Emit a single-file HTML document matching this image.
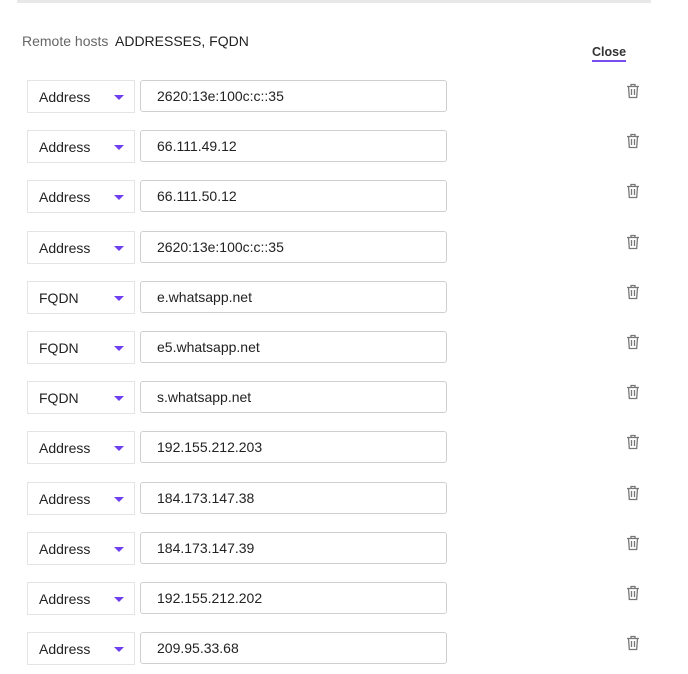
<!DOCTYPE html>
<html><head><style>
body{margin:0;width:688px;height:674px;background:#fff;font-family:"Liberation Sans",sans-serif;color:#222;position:relative;overflow:hidden}
.bar{position:absolute;left:17px;top:0;width:634px;height:3px;background:#e8e8e8}
.lbl{position:absolute;left:22px;top:33px;font-size:14px;color:#666}
.val{position:absolute;left:115px;top:33px;font-size:14px;color:#222}
.close{position:absolute;left:592px;top:45px;font-size:12.5px;font-weight:bold;color:#333;border-bottom:2px solid #7a4df0;padding-bottom:1px}
.sel{position:absolute;left:27px;width:108px;height:33px;border:1px solid #e4e4e4;box-sizing:border-box}
.sel span{position:absolute;left:11px;top:8px;font-size:14px}
.sel i{position:absolute;left:86px;top:14px;width:0;height:0;border-left:5px solid transparent;border-right:5px solid transparent;border-top:5px solid #6d3ff0}
.inp{position:absolute;left:140px;width:307px;height:32px;border:1px solid #cfcfcf;border-radius:3px;box-sizing:border-box}
.inp span{position:absolute;left:16px;top:7px;font-size:14px}
.tr{position:absolute;left:626px}
</style></head><body>
<div class="bar"></div>
<div class="lbl">Remote hosts</div>
<div class="val">ADDRESSES, FQDN</div>
<div class="close">Close</div>
<div id="rows"></div>
<script>
var d=[["Address","2620:13e:100c:c::35"],["Address","66.111.49.12"],["Address","66.111.50.12"],["Address","2620:13e:100c:c::35"],["FQDN","e.whatsapp.net"],["FQDN","e5.whatsapp.net"],["FQDN","s.whatsapp.net"],["Address","192.155.212.203"],["Address","184.173.147.38"],["Address","184.173.147.39"],["Address","192.155.212.202"],["Address","209.95.33.68"]];
var h="";
d.forEach(function(r,i){var y=80+i*50.2;
h+='<div class="sel" style="top:'+y+'px"><span>'+r[0]+'</span><i></i></div>';
h+='<div class="inp" style="top:'+y+'px"><span>'+r[1]+'</span></div>';
h+='<svg class="tr" style="top:'+(y+3)+'px" width="14" height="16" viewBox="0 0 14 16" fill="none" stroke="#777" stroke-width="1.3"><path d="M1 3.5h12M5 3.5V1.5h4v2M2.5 3.5l.8 11h7.4l.8-11M5.5 6v6M8.5 6v6"/></svg>';});
document.getElementById("rows").innerHTML=h;
</script>
</body></html>
